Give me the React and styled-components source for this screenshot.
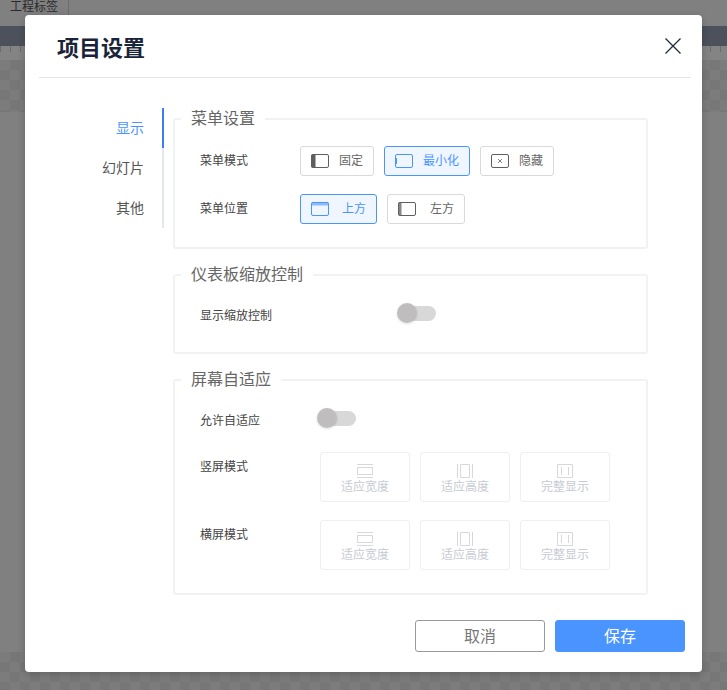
import React from 'react';
import styled, { createGlobalStyle } from 'styled-components';

const GlobalStyle = createGlobalStyle`
  html, body {
    margin: 0;
    padding: 0;
    height: 100%;
    overflow: hidden;
    font-family: "Noto Sans CJK SC", "Liberation Sans", sans-serif;
  }
  #root { height: 100%; }
`;

const menuModes = [
  { key: 'fixed', label: '固定', icon: 'fixed', gap: 10 },
  { key: 'min', label: '最小化', icon: 'min', gap: 10, active: true },
  { key: 'hidden', label: '隐藏', icon: 'hidden', gap: 10 },
];

const menuPositions = [
  { key: 'top', label: '上方', icon: 'top', gap: 13, active: true },
  { key: 'left', label: '左方', icon: 'left', gap: 14 },
];

const fitModes = [
  { key: 'width', label: '适应宽度', icon: 'width' },
  { key: 'height', label: '适应高度', icon: 'height' },
  { key: 'full', label: '完整显示', icon: 'full' },
];

const LayoutIcon = ({ type }) => (
  <svg width="18" height="14" viewBox="0 0 18 14" fill="none">
    <rect x="0.5" y="0.5" width="17" height="13" rx="1.5" stroke="currentColor" />
    {type === 'fixed' && <rect x="0.5" y="0.5" width="4" height="13" fill="currentColor" />}
    {type === 'left' && <rect x="0.5" y="0.5" width="3" height="13" fill="currentColor" opacity="0.75" />}
    {type === 'min' && <rect x="0.5" y="4" width="1.5" height="6" fill="currentColor" />}
    {type === 'top' && <rect x="0.5" y="0.5" width="17" height="3" fill="currentColor" opacity="0.6" />}
    {type === 'hidden' && <path d="M7 5l4 4M11 5l-4 4" stroke="currentColor" strokeWidth="0.8" />}
  </svg>
);

const FitIcon = ({ type }) => (
  <svg width="16" height="14" viewBox="0 0 16 14" fill="none" stroke="currentColor">
    {type === 'width' && <path d="M0 .5h16M.5 3.5h15v7H.5zM0 13.5h16" />}
    {type === 'height' && <path d="M.5 0v14M15.5 0v14M3.5 .5h9v13h-9z" />}
    {type === 'full' && <path d="M.5 .5h15v13H.5zM4.5 3v8M11.5 3v8" />}
  </svg>
);

const Switch = ({ offset }) => (
  <SwitchTrack $offset={offset}>
    <SwitchKnob />
  </SwitchTrack>
);

const App = () => (
  <>
    <GlobalStyle />
    <Page>
      <TabBar>
        <Tab>工程标签</Tab>
      </TabBar>
      <NavBar />
      <Ruler />
      <Checker $height={52} />
      <Backdrop />
      <Checker $height={38} />
      <Modal>
        <Header>
          <Title>项目设置</Title>
          <CloseButton aria-label="关闭">
            <svg width="16" height="16" viewBox="0 0 16 16" fill="none" stroke="#1f2a3d" strokeWidth="1.3">
              <path d="M.5 .5l15 15M15.5 .5l-15 15" />
            </svg>
          </CloseButton>
        </Header>
        <Body>
          <SideNav>
            <NavItem $active>显示</NavItem>
            <NavItem>幻灯片</NavItem>
            <NavItem>其他</NavItem>
          </SideNav>
          <Content>
            <Group $height={141}>
              <Legend>菜单设置</Legend>
              <Row $mb={18}>
                <RowLabel>菜单模式</RowLabel>
                <Options>
                  {menuModes.map((o) => (
                    <OptionButton key={o.key} $active={o.active} $gap={o.gap}>
                      <LayoutIcon type={o.icon} />
                      <OptionText>{o.label}</OptionText>
                    </OptionButton>
                  ))}
                </Options>
              </Row>
              <Row>
                <RowLabel>菜单位置</RowLabel>
                <Options>
                  {menuPositions.map((o) => (
                    <OptionButton key={o.key} $active={o.active} $gap={o.gap}>
                      <LayoutIcon type={o.icon} />
                      <OptionText>{o.label}</OptionText>
                    </OptionButton>
                  ))}
                </Options>
              </Row>
            </Group>
            <Group $height={90}>
              <Legend>仪表板缩放控制</Legend>
              <SwitchRow>
                <SwitchLabel>显示缩放控制</SwitchLabel>
                <Switch offset={126} />
              </SwitchRow>
            </Group>
            <Group $height={226}>
              <Legend>屏幕自适应</Legend>
              <SwitchRow>
                <SwitchLabel>允许自适应</SwitchLabel>
                <Switch offset={58} />
              </SwitchRow>
              <FitRow>
                <FitLabel>竖屏模式</FitLabel>
                <FitCards>
                  {fitModes.map((o) => (
                    <FitCard key={o.key}>
                      <FitIcon type={o.icon} />
                      {o.label}
                    </FitCard>
                  ))}
                </FitCards>
              </FitRow>
              <FitRow>
                <FitLabel>横屏模式</FitLabel>
                <FitCards>
                  {fitModes.map((o) => (
                    <FitCard key={o.key}>
                      <FitIcon type={o.icon} />
                      {o.label}
                    </FitCard>
                  ))}
                </FitCards>
              </FitRow>
            </Group>
          </Content>
        </Body>
        <Footer>
          <CancelButton>取消</CancelButton>
          <SaveButton>保存</SaveButton>
        </Footer>
      </Modal>
    </Page>
  </>
);

export default App;

const Page = styled.div`
  position: relative;
  width: 727px;
  height: 690px;
  overflow: hidden;
  display: flex;
  flex-direction: column;
  background: #808080;
`;

const TabBar = styled.div`
  height: 26px;
  flex: none;
  display: flex;
  padding-left: 10px;
  background: #808080;
`;

const Tab = styled.div`
  padding: 0 10px 0 0;
  border-right: 1px solid #6c6c6c;
  font-size: 12px;
  line-height: 12px;
  color: #2a2a2a;
`;

const NavBar = styled.div`
  height: 20px;
  flex: none;
  background: #4c515b;
`;

const Ruler = styled.div`
  height: 14px;
  flex: none;
  background: repeating-linear-gradient(90deg, #6b6b6b 0 1px, transparent 1px 10px) 0 0 / 100% 6px no-repeat #848484;
`;

const Checker = styled.div`
  height: ${(props) => props.$height}px;
  flex: none;
  background: repeating-conic-gradient(#777 0 25%, #7c7c7c 0 50%) 0 0 / 20px 20px;
`;

const Backdrop = styled.div`
  flex: 1;
  background: #808080;
`;

const Modal = styled.div`
  position: absolute;
  left: 25px;
  top: 15px;
  width: 677px;
  height: 657px;
  box-sizing: border-box;
  display: flex;
  flex-direction: column;
  padding: 0 11px 0 14px;
  background: #fff;
  border-radius: 4px;
  box-shadow: 0 2px 8px rgba(0, 0, 0, 0.2);
`;

const Header = styled.div`
  height: 62px;
  flex: none;
  display: flex;
  align-items: center;
  justify-content: space-between;
  padding: 0 10px 0 18px;
  border-bottom: 1px solid #e6e6e6;
`;

const Title = styled.h1`
  margin: 0;
  font-size: 22px;
  font-weight: 700;
  color: #1a2438;
`;

const CloseButton = styled.button`
  display: flex;
  padding: 0;
  border: 0;
  background: none;
  cursor: pointer;
`;

const Body = styled.div`
  flex: 1;
  display: flex;
  padding-top: 30px;
`;

const SideNav = styled.div`
  width: 125px;
  height: 120px;
  flex: none;
`;

const NavItem = styled.div`
  height: 40px;
  box-sizing: border-box;
  padding-right: 18px;
  border-right: 2px solid ${(props) => (props.$active ? '#3e7ff0' : '#e4e7ee')};
  text-align: right;
  font-size: 14px;
  line-height: 38px;
  color: ${(props) => (props.$active ? '#4a94ff' : '#555')};
  cursor: pointer;
`;

const Content = styled.div`
  width: 475px;
  margin-left: 9px;
  display: flex;
  flex-direction: column;
  gap: 15px;
`;

const Group = styled.fieldset`
  box-sizing: border-box;
  height: ${(props) => props.$height}px;
  min-width: 0;
  margin: 0;
  padding: 16px 0 0 25px;
  border: 2px solid #f1f2f4;
  border-radius: 3px;
`;

const Legend = styled.legend`
  margin-left: -19px;
  padding: 0 10px;
  font-size: 16px;
  line-height: 22px;
  color: #666;
  transform: translateY(-2px);
`;

const Row = styled.div`
  display: flex;
  margin-bottom: ${(props) => props.$mb || 0}px;
`;

const RowLabel = styled.div`
  width: 100px;
  flex: none;
  font-size: 12px;
  line-height: 28px;
  color: #444;
`;

const Options = styled.div`
  display: flex;
  gap: 10px;
`;

const OptionButton = styled.div`
  height: 30px;
  box-sizing: border-box;
  display: flex;
  align-items: center;
  gap: ${(props) => props.$gap}px;
  padding: 0 10px;
  border: 1px solid ${(props) => (props.$active ? '#4a94ff' : '#d9d9d9')};
  border-radius: 3px;
  background: ${(props) => (props.$active ? '#f0f6ff' : '#fff')};
  font-size: 12px;
  color: ${(props) => (props.$active ? '#4a94ff' : '#666')};
  cursor: pointer;

  svg {
    color: ${(props) => (props.$active ? '#4a94ff' : '#5f5f5f')};
    flex: none;
  }
`;

const OptionText = styled.span`
  margin-top: -3px;
`;

const SwitchRow = styled.div`
  display: flex;
  align-items: center;
  height: 22px;
  margin-bottom: 23px;
`;

const SwitchLabel = styled.div`
  margin-top: 4px;
  font-size: 12px;
  line-height: 22px;
  color: #444;
`;

const SwitchTrack = styled.div`
  position: relative;
  width: 38px;
  height: 15px;
  margin-left: ${(props) => props.$offset}px;
  border-radius: 8px;
  background: #d8d8d8;
`;

const SwitchKnob = styled.div`
  position: absolute;
  left: -1px;
  top: -2.5px;
  width: 20px;
  height: 20px;
  border-radius: 50%;
  background: #bfbdbe;
  box-shadow: 0 1px 3px rgba(0, 0, 0, 0.12);
`;

const FitRow = styled.div`
  display: flex;
  margin-bottom: 18px;
`;

const FitLabel = styled.div`
  width: 120px;
  flex: none;
  font-size: 12px;
  line-height: 28px;
  color: #444;
`;

const FitCards = styled.div`
  display: flex;
  gap: 10px;
`;

const FitCard = styled.div`
  width: 90px;
  height: 50px;
  box-sizing: border-box;
  display: flex;
  flex-direction: column;
  align-items: center;
  justify-content: center;
  border: 1px solid #eeeef4;
  border-radius: 3px;
  font-size: 12px;
  line-height: 16px;
  color: #c8cad2;

  svg {
    color: #d6d8de;
    margin-top: 4px;
  }
`;

const Footer = styled.div`
  flex: none;
  height: 52px;
  display: flex;
  justify-content: flex-end;
  gap: 10px;
  padding-right: 6px;
`;

const CancelButton = styled.button`
  width: 130px;
  height: 32px;
  padding: 0 0 2px;
  border: 1px solid #999;
  border-radius: 3px;
  background: #fff;
  font: inherit;
  font-size: 16px;
  color: #777;
  cursor: pointer;
`;

const SaveButton = styled(CancelButton)`
  border-color: #4a94ff;
  background: #4a94ff;
  color: #fff;
`;
